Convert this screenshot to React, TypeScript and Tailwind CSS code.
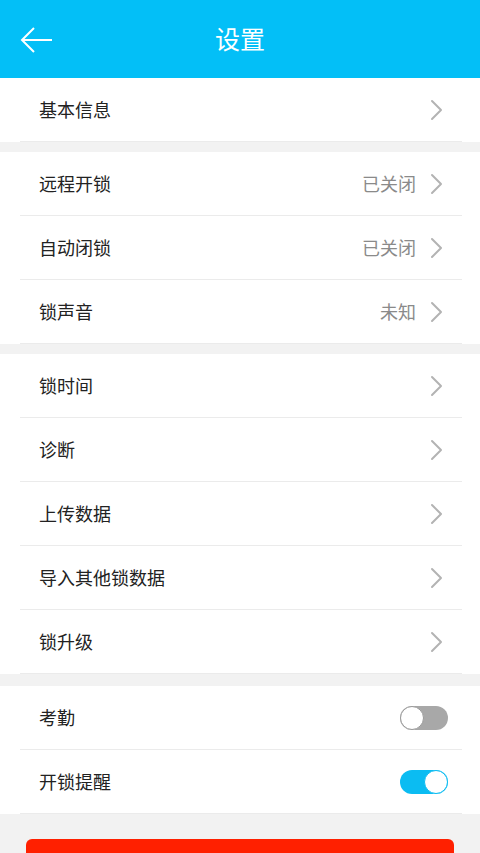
import React from "react";

const Chevron = () => (
  <svg width="14" height="22" viewBox="0 0 14 22" fill="none" className="shrink-0">
    <polyline points="3,2 12,11 3,20" stroke="#b3b3b3" strokeWidth="2" strokeLinecap="round" strokeLinejoin="round" />
  </svg>
);

const Toggle = ({ on }: { on: boolean }) => (
  <div
    className={`relative w-[48px] h-[24px] rounded-full ${on ? "bg-[#0bbcf2]" : "bg-[#a8a8a8]"}`}
  >
    <div
      className={`absolute top-0 w-[24px] h-[24px] rounded-full bg-white border ${
        on ? "right-0 border-[#0bbcf2]" : "left-0 border-[#9a9a9a]"
      }`}
    />
  </div>
);

type Row = { label: string; value?: string; toggle?: boolean };

const Group = ({ rows }: { rows: Row[] }) => (
  <div className="bg-white">
    {rows.map((r) => (
      <div
        key={r.label}
        className="ml-[20px] mr-[18px] h-[64px] flex items-center border-b-[1.5px] border-[#ebebeb]"
      >
        <span className="pl-[19px] flex-1 text-[18px] text-[#222222]">{r.label}</span>
        {r.toggle === undefined ? (
          <div className="flex items-center gap-[13px] pr-[19px]">
            {r.value && <span className="text-[18px] text-[#8a8a8a]">{r.value}</span>}
            <Chevron />
          </div>
        ) : (
          <div className="pr-[14px]">
            <Toggle on={r.toggle} />
          </div>
        )}
      </div>
    ))}
  </div>
);

export default function App() {
  return (
    <div
      className="w-[480px] h-[853px] overflow-hidden bg-[#f2f2f2] flex flex-col"
      style={{ fontFamily: '"Noto Sans CJK SC", "Noto Sans", sans-serif' }}
    >
      <div className="h-[78px] bg-[#03bff7] flex items-center relative shrink-0">
        <svg width="34" height="30" viewBox="0 0 34 30" className="absolute left-[20px] top-[26px]" fill="none">
          <line x1="2" y1="14" x2="32" y2="14" stroke="white" strokeWidth="2" />
          <polyline points="14,2 2,14 14,26" stroke="white" strokeWidth="2" strokeLinejoin="miter" />
        </svg>
        <h1 className="w-full text-center text-[25px] text-white font-normal">设置</h1>
      </div>

      <Group rows={[{ label: "基本信息" }]} />
      <div className="h-[10px] shrink-0" />
      <Group
        rows={[
          { label: "远程开锁", value: "已关闭" },
          { label: "自动闭锁", value: "已关闭" },
          { label: "锁声音", value: "未知" },
        ]}
      />
      <div className="h-[10px] shrink-0" />
      <Group
        rows={[
          { label: "锁时间" },
          { label: "诊断" },
          { label: "上传数据" },
          { label: "导入其他锁数据" },
          { label: "锁升级" },
        ]}
      />
      <div className="h-[12px] shrink-0" />
      <Group
        rows={[
          { label: "考勤", toggle: false },
          { label: "开锁提醒", toggle: true },
        ]}
      />
      <div className="px-[26px] pt-[25px]">
        <div className="h-[50px] rounded-[6px] bg-[#ff2000]" />
      </div>
    </div>
  );
}
